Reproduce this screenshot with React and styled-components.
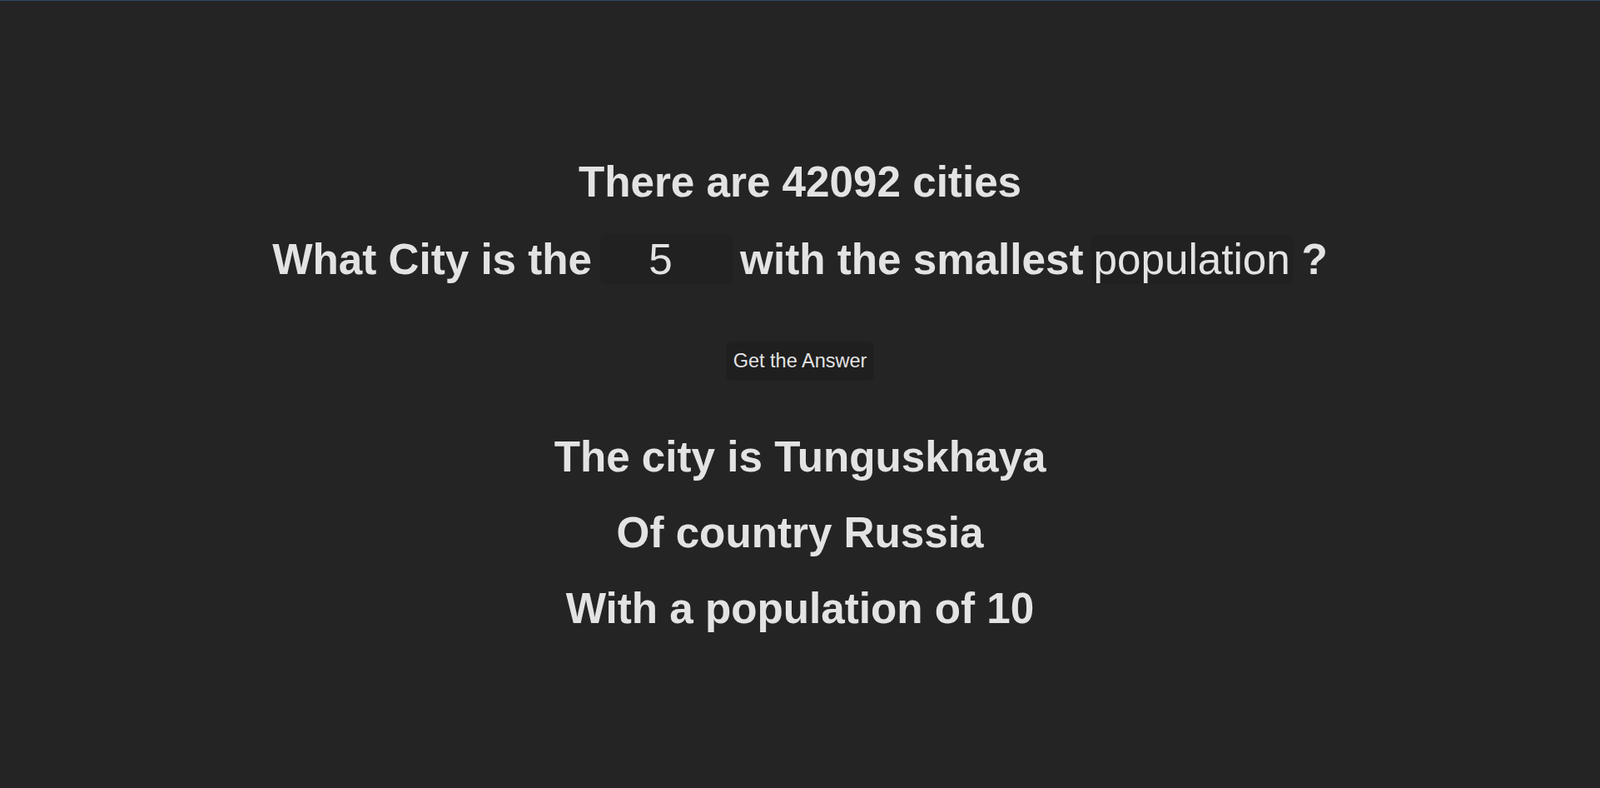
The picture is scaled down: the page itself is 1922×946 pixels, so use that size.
import React, { useState } from 'react'
import styled, { createGlobalStyle } from 'styled-components'

const GlobalStyle = createGlobalStyle`
  html, body {
    margin: 0;
    padding: 0;
  }
  body {
    background-color: #242424;
    color: rgba(255, 255, 255, 0.87);
    font-family: "Liberation Sans", Arial, sans-serif;
    border-top: 1px solid #2b4766;
    padding-top: 3px;
    min-height: 100vh;
    box-sizing: border-box;
    display: flex;
    align-items: center;
    justify-content: center;
  }
`

const Wraper = styled.div`
  width: 1280px;
  text-align: center;
  display: flex;
  flex-direction: column;
  align-items: center;
`

const Heading = styled.h1`
  margin: ${(props) => props.spacing || '0'};
  font-family: "Liberation Sans Narrow", "Liberation Sans", Arial, sans-serif;
  font-size: 51.2px;
  font-weight: bold;
  line-height: 56px;
  color: #e3e3e3;
  white-space: nowrap;
`

const NumberInput = styled.input`
  box-sizing: border-box;
  width: 160px;
  height: 60px;
  margin: 0 8px 0 10px;
  padding: 0 15px 0 0;
  border: none;
  border-radius: 8px;
  background-color: #212121;
  color: #e3e3e3;
  font-family: "Liberation Sans", Arial, sans-serif;
  font-size: 51.2px;
  font-weight: normal;
  text-align: center;
  vertical-align: baseline;
  outline: none;
`

const Select = styled.select`
  box-sizing: border-box;
  height: 59px;
  margin: 0 10px 0 9px;
  padding: 0 3px 0 3px;
  border: none;
  border-radius: 8px;
  background-color: #212121;
  color: #e3e3e3;
  font-family: "Liberation Sans", Arial, sans-serif;
  font-size: 51.2px;
  font-weight: normal;
  appearance: none;
  outline: none;
`

const Button = styled.button`
  margin: 69px 0 64px;
  padding: 10px 9px;
  border: none;
  border-radius: 8px;
  background-color: #1f1f1f;
  color: #e3e3e3;
  font-family: "Liberation Sans", Arial, sans-serif;
  font-size: 23.5px;
  line-height: 27px;
  cursor: pointer;
`

const App = () => {
  const [rank, setRank] = useState('5')
  const [field, setField] = useState('population')
  return (
    <>
      <GlobalStyle />
      <Wraper>
        <Heading>There are 42092 cities</Heading>
        <Heading spacing='34px 0 0'>
          What City is the
          <NumberInput type='text' value={rank} onChange={(e) => setRank(e.target.value)} />
          with the smallest
          <Select value={field} onChange={(e) => setField(e.target.value)}>
            <option value='population'>population</option>
          </Select>
          ?
        </Heading>
        <Button>Get the Answer</Button>
        <Heading>The city is Tunguskhaya</Heading>
        <Heading spacing='35px 0 0'>Of country Russia</Heading>
        <Heading spacing='35px 0 0'>With a population of 10</Heading>
      </Wraper>
    </>
  )
}

export default App
